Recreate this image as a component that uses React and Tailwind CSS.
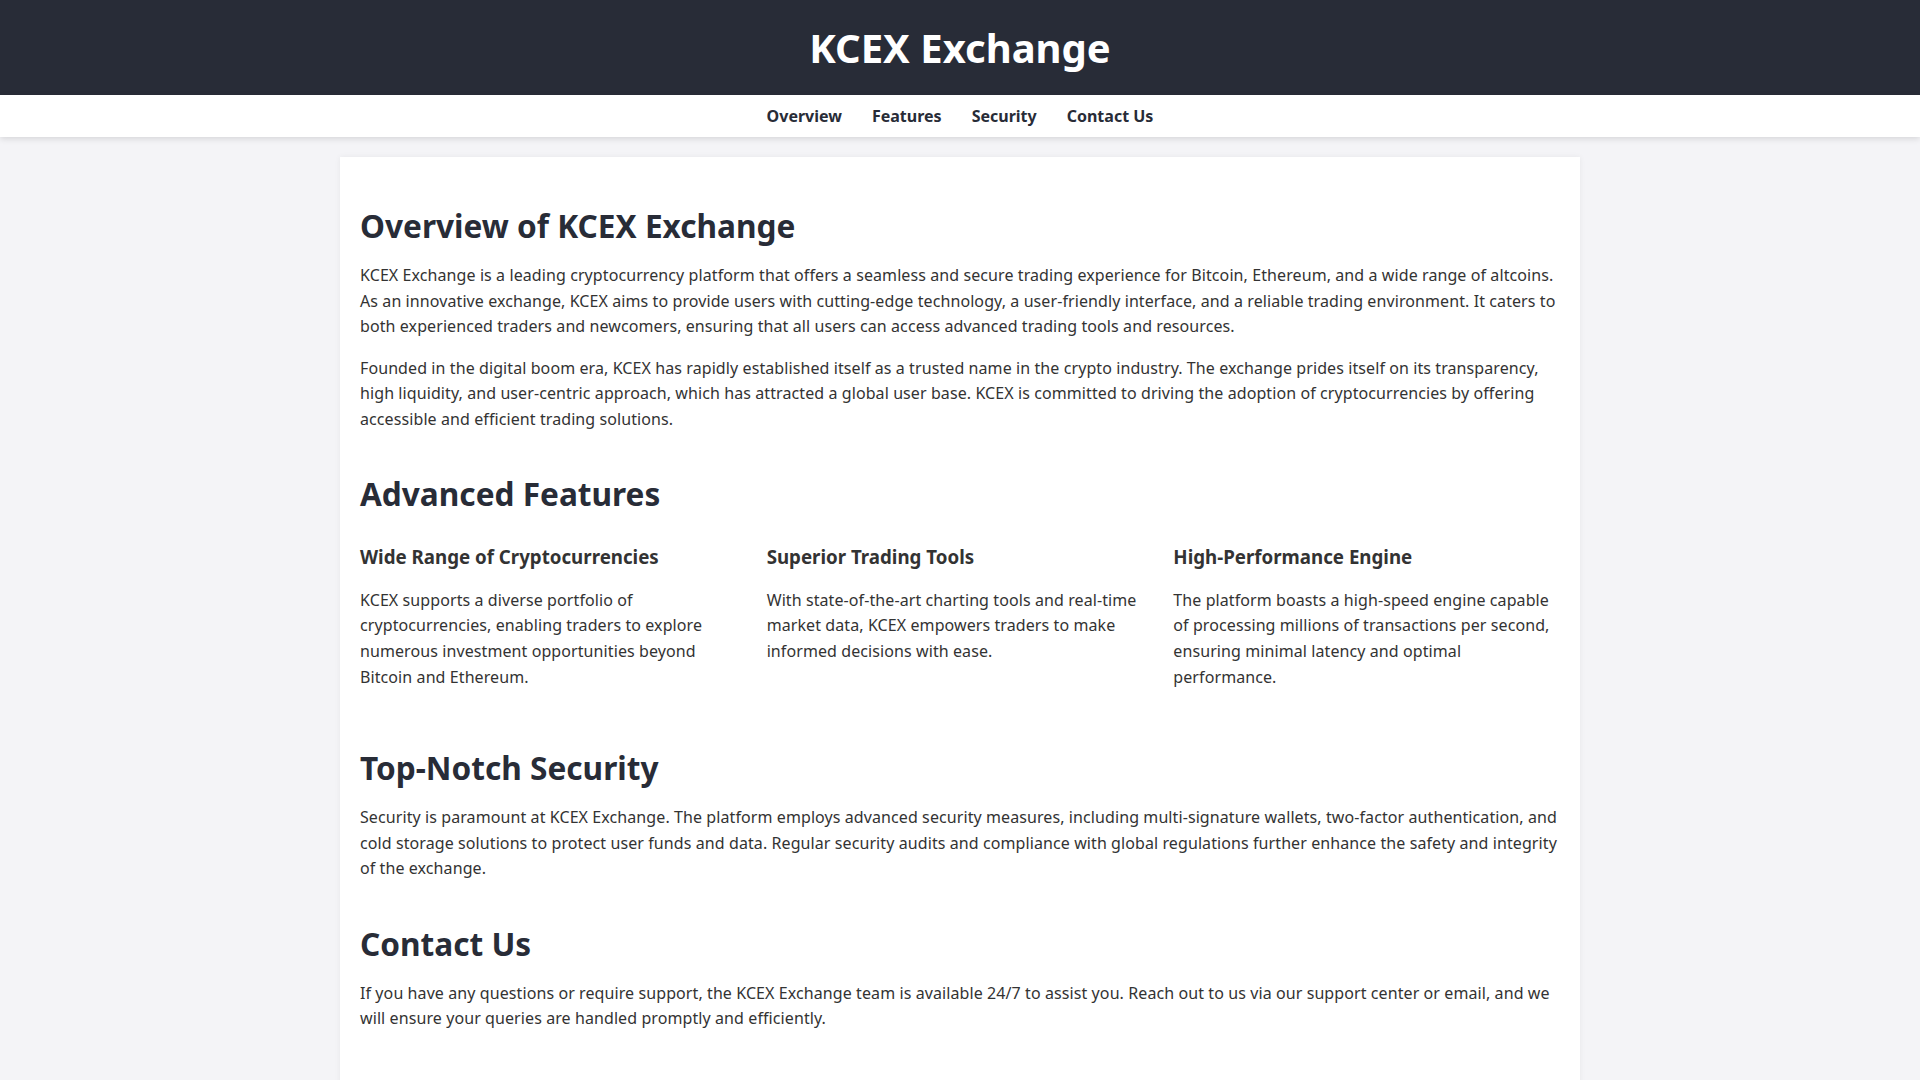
import React from 'react'

const features = [
  {
    title: 'Wide Range of Cryptocurrencies',
    text: 'KCEX supports a diverse portfolio of cryptocurrencies, enabling traders to explore numerous investment opportunities beyond Bitcoin and Ethereum.',
  },
  {
    title: 'Superior Trading Tools',
    text: 'With state-of-the-art charting tools and real-time market data, KCEX empowers traders to make informed decisions with ease.',
  },
  {
    title: 'High-Performance Engine',
    text: 'The platform boasts a high-speed engine capable of processing millions of transactions per second, ensuring minimal latency and optimal performance.',
  },
]

const navLinks = ['Overview', 'Features', 'Security', 'Contact Us']

const App = () => {
  return (
    <div className="min-h-screen bg-[#f4f4f7] font-['Noto_Sans',sans-serif] text-[#333]">
      {/* Header */}
      <header className="h-[95px] bg-[#282c37] flex items-center justify-center">
        <h1 className="text-[40px] leading-[1.2] font-bold text-white">KCEX Exchange</h1>
      </header>

      {/* Nav */}
      <nav className="h-[42px] bg-white shadow-[0_2px_6px_rgba(0,0,0,0.12)] flex items-center justify-center gap-[30px] relative">
        {navLinks.map((link) => (
          <a key={link} href="#" className="text-base font-bold text-[#282c37]">
            {link}
          </a>
        ))}
      </nav>

      {/* Content */}
      <main className="w-[1240px] mx-auto mt-5 bg-white px-5 pt-[50px] pb-[60px] shadow-[0_0_6px_rgba(0,0,0,0.06)] text-base leading-[1.6]">
        <section>
          <h2 className="text-[31.6px] leading-[1.2] font-bold text-[#282c37] mb-[18px]">Overview of KCEX Exchange</h2>
          <p className="mb-4 tracking-[0.09px]">
            KCEX Exchange is a leading cryptocurrency platform that offers a seamless and secure trading experience for Bitcoin, Ethereum, and a wide range of altcoins. As an innovative exchange, KCEX aims to provide users with cutting-edge technology, a user-friendly interface, and a reliable trading environment. It caters to both experienced traders and newcomers, ensuring that all users can access advanced trading tools and resources.
          </p>
          <p className="tracking-[0.09px]">
            Founded in the digital boom era, KCEX has rapidly established itself as a trusted name in the crypto industry. The exchange prides itself on its transparency, high liquidity, and user-centric approach, which has attracted a global user base. KCEX is committed to driving the adoption of cryptocurrencies by offering accessible and efficient trading solutions.
          </p>
        </section>

        <section className="mt-[43px]">
          <h2 className="text-[31.6px] leading-[1.2] font-bold text-[#282c37] mb-[33px]">Advanced Features</h2>
          <div className="grid grid-cols-3 gap-5 pb-4">
            {features.map((f) => (
              <div key={f.title}>
                <h3 className="text-[18.72px] leading-[1.2] font-bold text-[#333] mb-[19px]">{f.title}</h3>
                <p className="tracking-[0.09px]">{f.text}</p>
              </div>
            ))}
          </div>
        </section>

        <section className="mt-[43px]">
          <h2 className="text-[31.6px] leading-[1.2] font-bold text-[#282c37] mb-[18px]">Top-Notch Security</h2>
          <p className="tracking-[0.09px]">
            Security is paramount at KCEX Exchange. The platform employs advanced security measures, including multi-signature wallets, two-factor authentication, and cold storage solutions to protect user funds and data. Regular security audits and compliance with global regulations further enhance the safety and integrity of the exchange.
          </p>
        </section>

        <section className="mt-[43px]">
          <h2 className="text-[31.6px] leading-[1.2] font-bold text-[#282c37] mb-[18px]">Contact Us</h2>
          <p className="tracking-[0.09px]">
            If you have any questions or require support, the KCEX Exchange team is available 24/7 to assist you. Reach out to us via our support center or email, and we will ensure your queries are handled promptly and efficiently.
          </p>
        </section>
      </main>
    </div>
  )
}

export default App
